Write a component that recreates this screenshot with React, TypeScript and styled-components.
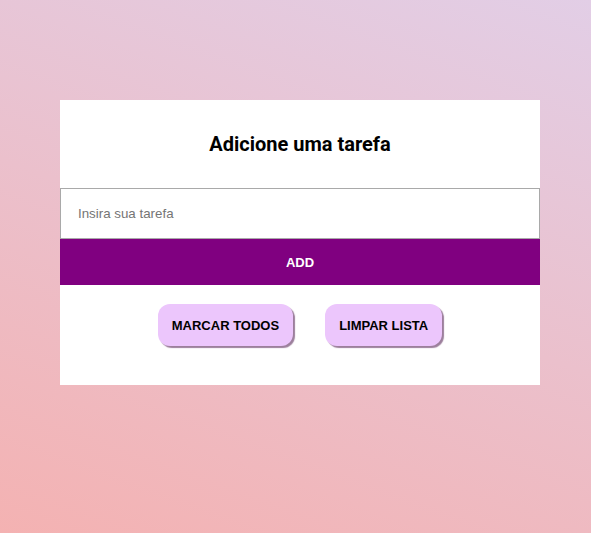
import React, { useState } from 'react';
import styled, { createGlobalStyle } from 'styled-components';

const GlobalStyle = createGlobalStyle`
  html, body {
    margin: 0;
    padding: 0;
    height: 100%;
  }
  body {
    background: linear-gradient(20deg, #f4b2b2, #e2cee6);
    font-family: 'Liberation Sans', Arial, sans-serif;
  }
`;

const Page = styled.div`
  min-height: 533px;
  padding: 100px 0 0 9px;
  box-sizing: border-box;
`;

const Card = styled.div`
  width: 480px;
  margin: 0 auto;
  background: #fff;
  display: flex;
  flex-direction: column;
`;

const Title = styled.h2`
  margin: 0;
  height: 88px;
  display: flex;
  align-items: center;
  justify-content: center;
  font-family: Roboto, 'Noto Sans', sans-serif;
  font-weight: 700;
  font-size: 20px;
  color: #000;
`;

const TaskInput = styled.input`
  box-sizing: border-box;
  width: 100%;
  height: 51px;
  border: 1px solid #a9a9a9;
  padding: 0 17px;
  font-family: 'Liberation Sans', Arial, sans-serif;
  font-size: 13.33px;
  outline: none;

  &::placeholder {
    color: #757575;
  }
`;

const AddButton = styled.button`
  height: 46px;
  width: 100%;
  border: none;
  background: #800080;
  color: #fff;
  font-family: 'Liberation Sans', Arial, sans-serif;
  font-weight: 700;
  font-size: 13px;
  cursor: pointer;
`;

const Actions = styled.div`
  display: flex;
  justify-content: center;
  gap: 32px;
  padding: 19px 0 39px;
`;

const ActionButton = styled.button`
  height: 42px;
  padding: 0 14px;
  border: none;
  border-radius: 12px;
  background: #ecc6fc;
  color: #000;
  font-family: 'Liberation Sans', Arial, sans-serif;
  font-weight: 700;
  font-size: 13px;
  box-shadow: 2px 2px 1px #9c7f9c;
  cursor: pointer;
`;

export default function App() {
  const [task, setTask] = useState('');

  return (
    <Page>
      <GlobalStyle />
      <Card>
        <Title>Adicione uma tarefa</Title>
        <TaskInput
          placeholder="Insira sua tarefa"
          value={task}
          onChange={(e) => setTask(e.target.value)}
        />
        <AddButton>ADD</AddButton>
        <Actions>
          <ActionButton>MARCAR TODOS</ActionButton>
          <ActionButton>LIMPAR LISTA</ActionButton>
        </Actions>
      </Card>
    </Page>
  );
}
